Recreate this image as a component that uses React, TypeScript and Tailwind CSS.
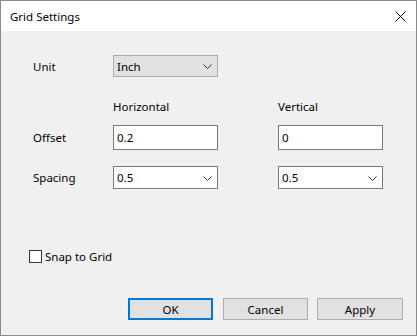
function Chevron() {
  return (
    <svg width="9" height="5" viewBox="0 0 9 5" className="shrink-0">
      <path d="M0.5 0.5 L4.5 4.5 L8.5 0.5" fill="none" stroke="#333" strokeWidth="1" />
    </svg>
  )
}

function Select({ value, gray }: { value: string; gray?: boolean }) {
  return (
    <div
      className={
        gray
          ? 'w-[105px] h-[22px] flex items-center justify-between pl-[3px] pr-[5px] pt-[1px] bg-[#e1e1e1] border border-[#adadad]'
          : 'w-[105px] h-[23px] flex items-center justify-between pl-[3px] pr-[5px] pt-[1px] bg-white border border-[#7a7a7a]'
      }
    >
      <span>{value}</span>
      <Chevron />
    </div>
  )
}

function TextBox({ value }: { value: string }) {
  return (
    <div className="w-[105px] h-[25px] flex items-center pl-[3px] pt-[1px] bg-white border border-[#7a7a7a]">
      <span>{value}</span>
    </div>
  )
}

function Button({ label, primary, className }: { label: string; primary?: boolean; className?: string }) {
  return (
    <button
      className={
        'w-[85px] h-[22px] flex items-center justify-center pt-[1px] bg-[#e1e1e1] ' +
        (primary ? 'border-2 border-[#0078d7] ' : 'border border-[#adadad] ') +
        (className ?? '')
      }
    >
      {label}
    </button>
  )
}

export default function App() {
  return (
    <div
      className="w-[417px] h-[336px] border border-[#8a8a8a] flex flex-col text-[11.5px] text-black leading-[16px]"
      style={{ fontFamily: '"Segoe UI", "Noto Sans", sans-serif' }}
    >
      <div className="h-[30px] bg-white flex items-center justify-between pl-[9px] pr-[10px] pt-[1px]">
        <span>Grid Settings</span>
        <svg width="11" height="11" viewBox="0 0 11 11">
          <path d="M0.5 0.5 L10.5 10.5 M10.5 0.5 L0.5 10.5" stroke="#000" strokeWidth="1" />
        </svg>
      </div>

      <div className="flex-1 bg-[#f0f0f0] flex flex-col pl-[32px] pr-[13px]">
        <div className="mt-[24px] flex items-center">
          <span className="w-[80px] pt-[2px]">Unit</span>
          <Select value="Inch" gray />
        </div>

        <div className="mt-[22px] flex items-center h-[16px]">
          <span className="w-[80px]" />
          <span className="w-[165px]">Horizontal</span>
          <span>Vertical</span>
        </div>

        <div className="mt-[10px] flex items-center">
          <span className="w-[80px] pt-[1px]">Offset</span>
          <TextBox value="0.2" />
          <span className="w-[60px]" />
          <TextBox value="0" />
        </div>

        <div className="mt-[16px] flex items-center">
          <span className="w-[80px]">Spacing</span>
          <Select value="0.5" />
          <span className="w-[60px]" />
          <Select value="0.5" />
        </div>

        <div className="mt-[60px] -ml-[4px] flex items-center h-[14px]">
          <span className="w-[13px] h-[13px] border border-[#333] bg-white" />
          <span className="ml-[3px] pt-[1px]">Snap to Grid</span>
        </div>

        <div className="mt-[35px] flex justify-end">
          <Button label="OK" primary />
          <Button label="Cancel" className="ml-[10px]" />
          <Button label="Apply" className="ml-[9px] w-[86px]" />
        </div>
      </div>
    </div>
  )
}
